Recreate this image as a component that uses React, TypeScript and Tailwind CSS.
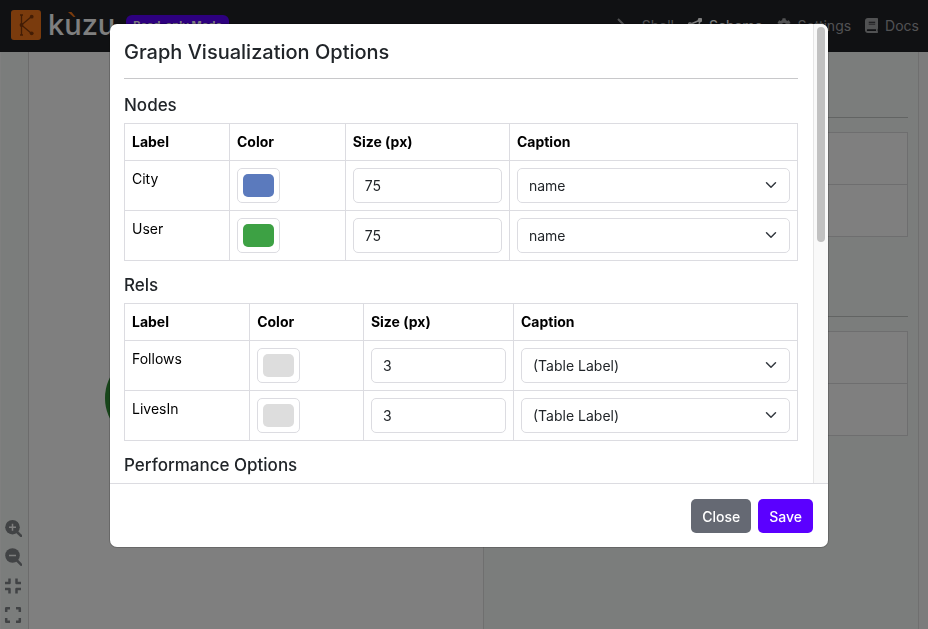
import { useId } from "react";
import type { ReactNode } from "react";
import { FaBook, FaCog } from "react-icons/fa";

type Row = { label: string; color: string; size: number; caption: string };

const nodes: Row[] = [
  { label: "City", color: "#5b7abd", size: 75, caption: "name" },
  { label: "User", color: "#3da144", size: 75, caption: "name" },
];
const rels: Row[] = [
  { label: "Follows", color: "#dddddd", size: 3, caption: "(Table Label)" },
  { label: "LivesIn", color: "#dddddd", size: 3, caption: "(Table Label)" },
];

function Logo() {
  return (
    <svg viewBox="0 0 30 30" className="size-[30px]" aria-hidden="true">
      <rect width="30" height="30" rx="3" fill="#f4761a" />
      <g stroke="#863a0a" strokeWidth="1.3" fill="none">
        <path d="M10.5 5v20M10.5 15 20.5 6.5M10.5 15 20.5 23.5M9 5h3M9 25h3" />
      </g>
      <g fill="#863a0a">
        <circle cx="10.5" cy="15" r="1.9" />
        <circle cx="20.7" cy="6.7" r="1.9" />
        <circle cx="20.7" cy="23.3" r="1.9" />
      </g>
    </svg>
  );
}

function NavLink({ icon, children, active }: { icon: ReactNode; children: ReactNode; active?: boolean }) {
  return (
    <a
      href="#"
      className={active ? "flex items-center gap-[7px] text-white" : "flex items-center gap-[7px] text-[#a3a4a6]"}
    >
      {icon}
      {children}
    </a>
  );
}

function Navbar() {
  return (
    <header className="flex h-[52px] items-center justify-between bg-[#202327] pb-[2px] pl-[11px] pr-[9px] text-[14px]">
      <div className="flex items-center">
        <Logo />
        <span className="relative ml-[7px] text-[29px] font-medium leading-[36px] text-white">
          kuzu
          <svg viewBox="0 0 8 5" className="absolute left-[20px] top-[5px] h-[5px] w-[8px]" aria-hidden="true">
            <path d="M0 0h3.5l4 5h-2z" fill="#f4761a" />
          </svg>
        </span>
        <span className="ml-[11px] rounded-md bg-[#5b00ff] px-[7px] py-1 text-[11px] font-bold leading-[12px] text-white">
          Read-only Mode
        </span>
      </div>
      <nav className="flex items-center gap-[14px]">
        <NavLink
          icon={
            <svg viewBox="0 0 18 14" className="h-[14px] w-[18px]" fill="none" stroke="currentColor" strokeWidth="2" aria-hidden="true">
              <path d="m1 1 6 6-6 6M8 13h10" />
            </svg>
          }
        >
          Shell
        </NavLink>
        <NavLink
          active
          icon={
            <svg viewBox="0 0 14 14" className="size-[14px]" fill="currentColor" stroke="currentColor" strokeWidth="1.5" aria-hidden="true">
              <path d="M2 6.5 12 2 10 12z" fill="none" />
              <circle cx="2" cy="6.5" r="1.5" />
              <circle cx="12" cy="2" r="1.5" />
              <circle cx="10" cy="12" r="1.5" />
            </svg>
          }
        >
          Schema
        </NavLink>
        <NavLink icon={<FaCog className="size-[14px]" />}>Settings</NavLink>
        <NavLink icon={<FaBook className="h-[15px] w-[13px]" />}>Docs</NavLink>
      </nav>
    </header>
  );
}

function ToolButton({ label, children }: { label: string; children: ReactNode }) {
  return (
    <button type="button" aria-label={label} className="flex size-[18px] items-center justify-center">
      <svg viewBox="0 0 18 18" className="size-[18px]" fill="none" stroke="#83868a" strokeWidth="2.5" aria-hidden="true">
        {children}
      </svg>
    </button>
  );
}

function ToolRail() {
  return (
    <aside className="flex w-[29px] flex-col items-start justify-end gap-[11px] border-l border-r border-l-white border-r-[#d8d8d8] bg-[#f7fbf9] pb-[5px] pl-[3px]">
      <ToolButton label="Zoom in">
        <circle cx="8.5" cy="8.2" r="7.3" fill="#83868a" stroke="none" />
        <path d="m12.5 12.500 5.500 5.300" />
        <path d="M8.5 4.700v7M5 8.200h7" stroke="#fff" strokeWidth="1.5" />
      </ToolButton>
      <ToolButton label="Zoom out">
        <circle cx="8.5" cy="7.5" r="7.3" fill="#83868a" stroke="none" />
        <path d="m12.5 12 5.500 5.500" />
        <path d="M5 7.5h7" stroke="#fff" strokeWidth="1.5" />
      </ToolButton>
      <ToolButton label="Shrink">
        <path d="M1 6h4.5V1.500M12.5 1.500V6H17M1 12h4.5v4.500M12.5 16.500V12H17" strokeLinejoin="round" />
      </ToolButton>
      <ToolButton label="Fit to screen">
        <path d="M2.2 6V2.200H6M12 2.200h3.800V6M2.200 12v3.800H6M12 15.800h3.800V12" strokeLinejoin="round" />
      </ToolButton>
    </aside>
  );
}

function SidePanel() {
  return (
    <section className="w-[436px] shrink-0 border-l border-r border-[#dedede] bg-[#f7fbf9] px-[10px] pt-[65px]">
      {[0, 1].map((n) => (
        <div key={n} className="mb-[79px] border-t border-[#c4c8c6] pt-[14px]">
          <div className="h-[53px] border border-[#dcdcdf] bg-white" />
          <div className="h-[52px] border border-t-0 border-[#dcdcdf] bg-white" />
        </div>
      ))}
    </section>
  );
}

const cell = "border border-[#dcdce1] p-[7px] text-left align-top";
const field = "h-[35px] w-full rounded-[5px] border border-[#dcdce1] bg-white px-[11px] text-[14px] text-[#212529]";

function OptionsTable({ title, rows, cols }: { title: string; rows: Row[]; cols: number[] }) {
  const id = useId();
  return (
    <section className="mb-[13px]">
      <h2 id={id} className="mb-[7px] text-[17px] font-medium leading-[22px] text-[#212529]">
        {title}
      </h2>
      <table aria-labelledby={id} className="w-full table-fixed border-collapse text-[14px] leading-[22px] text-black">
        <colgroup>
          {cols.map((w, i) => (
            <col key={i} style={{ width: `${w}%` }} />
          ))}
        </colgroup>
        <thead>
          <tr>
            {["Label", "Color", "Size (px)", "Caption"].map((h) => (
              <th key={h} scope="col" className={`${cell} font-bold`}>
                {h}
              </th>
            ))}
          </tr>
        </thead>
        <tbody>
          {rows.map((r) => (
            <tr key={r.label}>
              <td className={cell}>{r.label}</td>
              <td className={cell}>
                <input
                  type="color"
                  aria-label={`${r.label} color`}
                  defaultValue={r.color}
                  className="block h-[35px] w-[43px] rounded-[5px] border border-[#dcdce1] bg-white p-[5px] [&::-webkit-color-swatch-wrapper]:p-0 [&::-webkit-color-swatch]:rounded-[5px] [&::-webkit-color-swatch]:border-0"
                />
              </td>
              <td className={cell}>
                <input type="text" inputMode="numeric" aria-label={`${r.label} size`} defaultValue={r.size} className={`${field} block`} />
              </td>
              <td className={cell}>
                <div className="relative">
                  <select aria-label={`${r.label} caption`} className={`${field} block appearance-none`}>
                    <option>{r.caption}</option>
                  </select>
                  <svg
                    viewBox="0 0 16 16"
                    className="pointer-events-none absolute right-[13px] top-[11px] size-3"
                    fill="none"
                    stroke="#343a40"
                    strokeWidth="2"
                    strokeLinecap="round"
                    strokeLinejoin="round"
                    aria-hidden="true"
                  >
                    <path d="m2 5 6 6 6-6" />
                  </svg>
                </div>
              </td>
            </tr>
          ))}
        </tbody>
      </table>
    </section>
  );
}

function OptionsDialog() {
  return (
    <div
      role="dialog"
      aria-modal="true"
      aria-labelledby="dialog-title"
      className="flex w-full max-w-[718px] flex-col self-start overflow-hidden rounded-[7px] bg-white shadow-[0_0_0_1px_rgba(0,0,0,0.18)]"
    >
      <div className="flex h-[459px]">
        <div className="min-w-0 flex-1 overflow-hidden pl-[14px] pr-[15px] pt-[14px]">
          <h1 id="dialog-title" className="text-[20px] font-medium leading-[28px] text-[#212529]">
            Graph Visualization Options
          </h1>
          <hr className="mb-[15px] mt-[12px] border-[#c8c8ca]" />
          <OptionsTable title="Nodes" rows={nodes} cols={[15.6, 17.2, 24.4, 42.8]} />
          <OptionsTable title="Rels" rows={rels} cols={[18.6, 16.9, 22.3, 42.2]} />
          <h2 className="text-[17px] font-medium leading-[22px] text-[#212529]">Performance Options</h2>
        </div>
        <div className="w-[15px] shrink-0 border-l border-[#e6e6e6] bg-[#f9f9f9] pl-[3px] pt-[3px]">
          <div className="h-[215px] w-2 rounded-full bg-[#c1c1c1]" />
        </div>
      </div>
      <footer className="flex justify-end gap-[7px] border-t border-[#dcdce1] px-[15px] pb-[14px] pt-[15px] text-[14px] font-medium text-white">
        <button type="button" className="h-[34px] rounded-[5px] bg-[#656973] px-[11px]">
          Close
        </button>
        <button type="button" className="h-[34px] rounded-[5px] bg-[#5b00ff] px-[11px]">
          Save
        </button>
      </footer>
    </div>
  );
}

export default function App() {
  return (
    <div className="relative flex min-h-screen flex-col bg-white font-['Inter',sans-serif]">
      <Navbar />
      <main className="flex flex-1">
        <ToolRail />
        <div className="relative flex-1 overflow-hidden bg-white">
          <div className="absolute left-[76px] top-[300px] size-[92px] rounded-full bg-[#2f8a35]" />
        </div>
        <SidePanel />
        <div className="w-[9px] shrink-0 bg-[#f9f9f9]" />
      </main>
      <div className="fixed inset-0 flex justify-center bg-black/50 pl-[10px] pt-6">
        <OptionsDialog />
      </div>
    </div>
  );
}
